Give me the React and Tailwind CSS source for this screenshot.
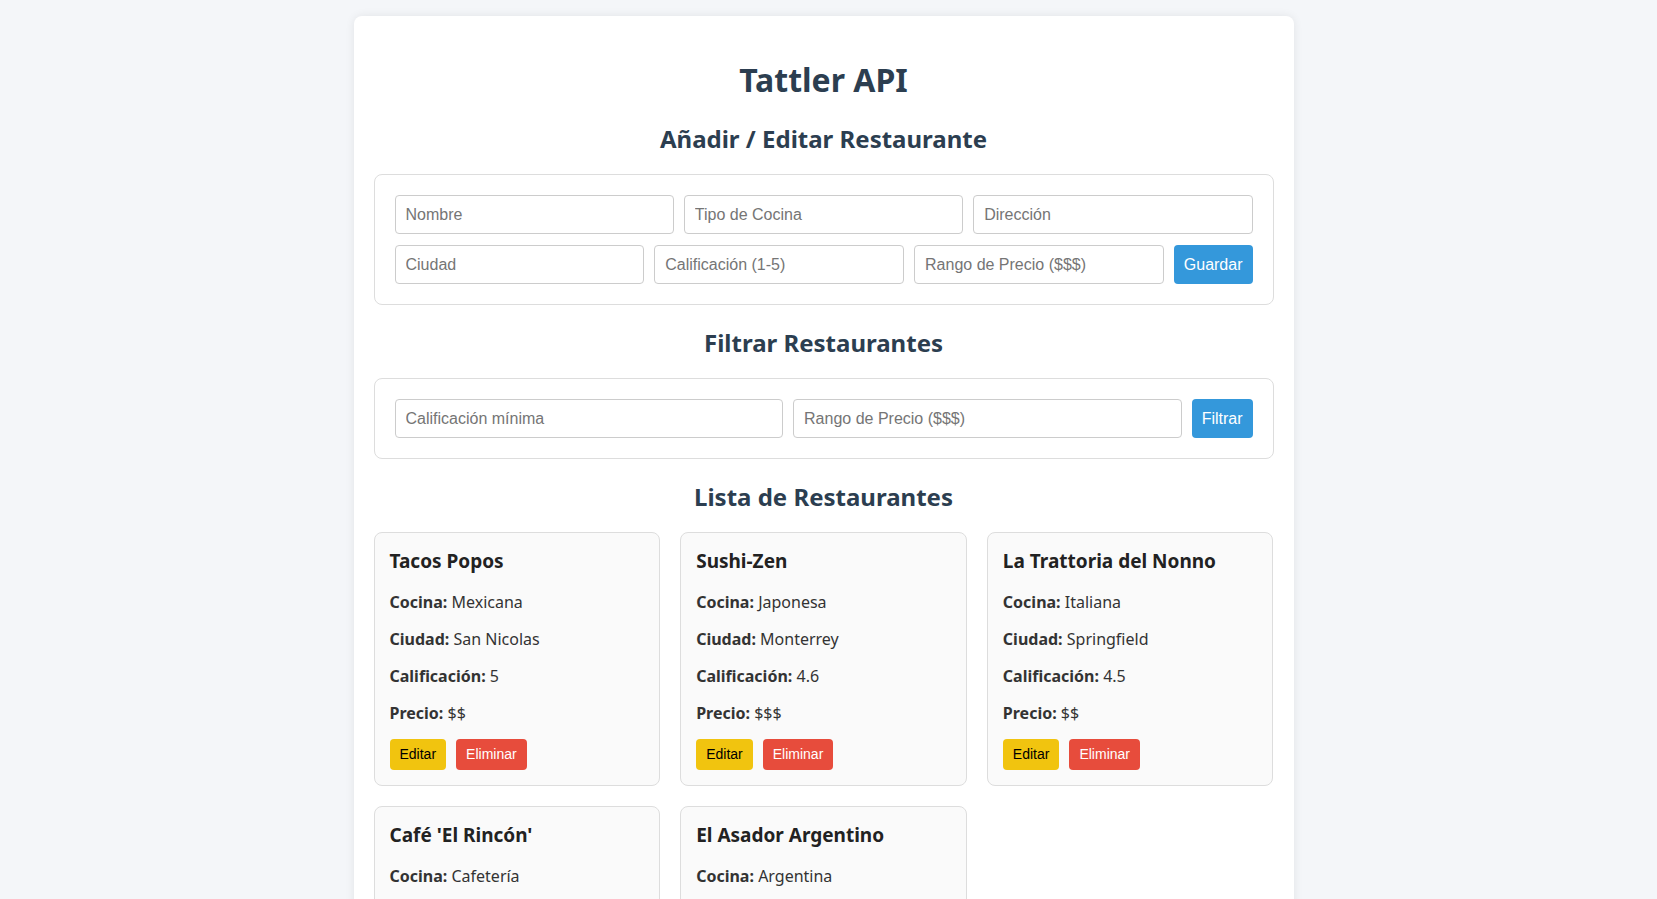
const restaurants = [
  { id: 1, nombre: 'Tacos Popos', cocina: 'Mexicana', ciudad: 'San Nicolas', calificacion: 5, precio: '$$' },
  { id: 2, nombre: 'Sushi-Zen', cocina: 'Japonesa', ciudad: 'Monterrey', calificacion: 4.6, precio: '$$$' },
  { id: 3, nombre: 'La Trattoria del Nonno', cocina: 'Italiana', ciudad: 'Springfield', calificacion: 4.5, precio: '$$' },
  { id: 4, nombre: "Café 'El Rincón'", cocina: 'Cafetería', ciudad: 'Guadalupe', calificacion: 4.2, precio: '$' },
  { id: 5, nombre: 'El Asador Argentino', cocina: 'Argentina', ciudad: 'San Pedro', calificacion: 4.8, precio: '$$$' },
];

const inputCls =
  "h-[39px] min-w-0 rounded-[4px] border border-[#ccc] bg-white px-[10px] text-[16px] text-[#333] font-['Liberation_Sans',Arial,sans-serif] placeholder:text-[#757575] outline-none";

const btnBlue =
  "h-[39px] shrink-0 rounded-[4px] bg-[#3498db] px-[10px] text-[16px] text-white font-['Liberation_Sans',Arial,sans-serif]";

const App = () => {
  return (
    <div className="min-h-screen bg-[#f4f6f9] pt-4 pr-[10px] font-['Noto_Sans',sans-serif] text-[#333]">
      <div className="mx-auto w-[940px] rounded-[8px] bg-white p-5 shadow-[0_0_10px_rgba(0,0,0,0.08)]">
        {/* Header */}
        <h1 className="mt-6 mb-[23px] text-center text-[32px] font-bold leading-[40px] text-[#2c3e50]">
          Tattler API
        </h1>

        {/* Form */}
        <h2 className="mb-[19px] text-center text-[24px] font-bold leading-[32px] text-[#2c3e50]">
          Añadir / Editar Restaurante
        </h2>
        <div className="mb-[22px] flex flex-col gap-y-[11px] rounded-[8px] border border-[#ddd] p-5">
          <div className="grid grid-cols-3 gap-[10px]">
            <input className={inputCls} placeholder="Nombre" />
            <input className={inputCls} placeholder="Tipo de Cocina" />
            <input className={inputCls} placeholder="Dirección" />
          </div>
          <div className="flex gap-[10px]">
            <input className={`${inputCls} flex-1`} placeholder="Ciudad" />
            <input className={`${inputCls} flex-1`} placeholder="Calificación (1-5)" />
            <input className={`${inputCls} flex-1`} placeholder="Rango de Precio ($$$)" />
            <button className={btnBlue}>Guardar</button>
          </div>
        </div>

        {/* Filter */}
        <h2 className="mb-[19px] text-center text-[24px] font-bold leading-[32px] text-[#2c3e50]">
          Filtrar Restaurantes
        </h2>
        <div className="mb-[22px] flex gap-[10px] rounded-[8px] border border-[#ddd] p-5">
          <input className={`${inputCls} flex-1`} placeholder="Calificación mínima" />
          <input className={`${inputCls} flex-1`} placeholder="Rango de Precio ($$$)" />
          <button className={btnBlue}>Filtrar</button>
        </div>

        {/* List */}
        <h2 className="mb-[19px] text-center text-[24px] font-bold leading-[32px] text-[#2c3e50]">
          Lista de Restaurantes
        </h2>
        <div className="grid grid-cols-3 gap-5">
          {restaurants.map((r) => (
            <div key={r.id} className="rounded-[8px] border border-[#ddd] bg-[#fafafa] p-[15px]">
              <h3 className="mb-[17px] text-[19px] font-bold leading-[27px] text-[#222]">{r.nombre}</h3>
              <p className="mb-4 text-[16px] leading-[21px]">
                <strong>Cocina:</strong> {r.cocina}
              </p>
              <p className="mb-4 text-[16px] leading-[21px]">
                <strong>Ciudad:</strong> {r.ciudad}
              </p>
              <p className="mb-4 text-[16px] leading-[21px]">
                <strong>Calificación:</strong> {r.calificacion}
              </p>
              <p className="mb-[15px] text-[16px] leading-[21px]">
                <strong>Precio:</strong> {r.precio}
              </p>
              <div className="flex gap-[10px] font-['Liberation_Sans',Arial,sans-serif] text-[14px]">
                <button className="h-[31px] rounded-[4px] bg-[#f1c40f] px-[10px] text-black">Editar</button>
                <button className="h-[31px] rounded-[4px] bg-[#e74c3c] px-[10px] text-white">Eliminar</button>
              </div>
            </div>
          ))}
        </div>
      </div>
    </div>
  );
};

export default App;
